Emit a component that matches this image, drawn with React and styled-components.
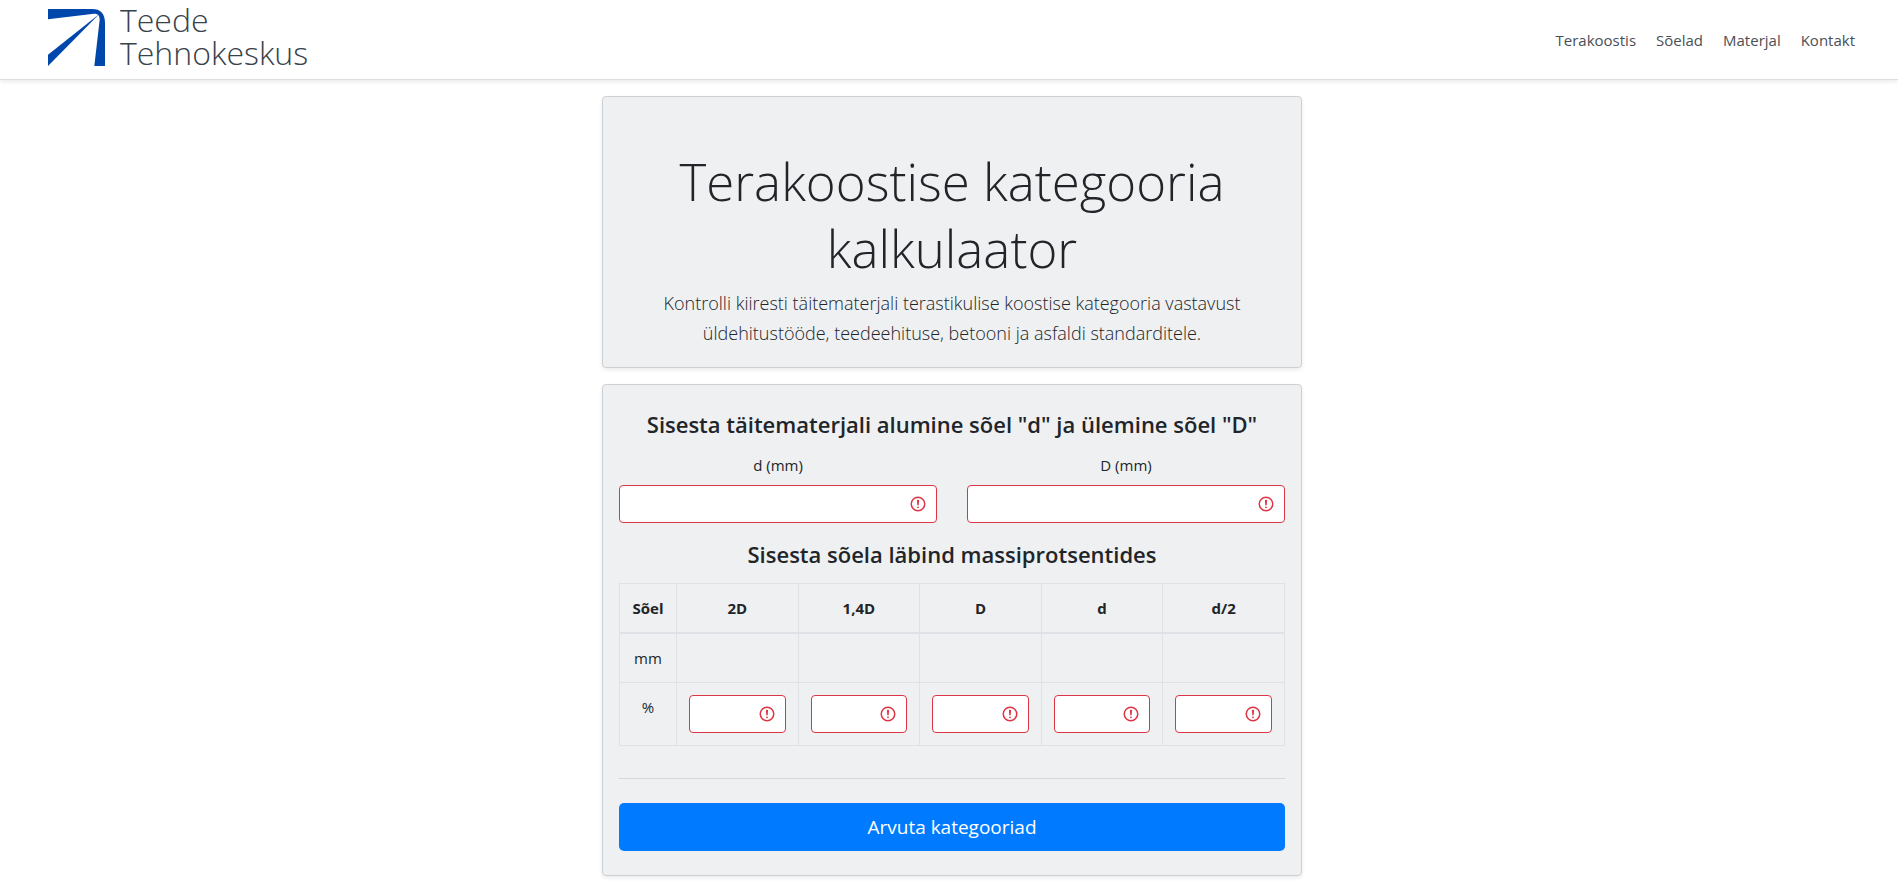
import { useState } from "react"
import styled, { createGlobalStyle } from "styled-components"

const links = ["Terakoostis", "Sõelad", "Materjal", "Kontakt"]
const sieves = ["2D", "1,4D", "D", "d", "d/2"]

function Logo() {
    return (
        <LogoMark viewBox="0 0 171 171" aria-hidden="true">
            <path d="M0 0H132C158 0 171 14 171 42V171H139L155 32C155 20 151 14 138 14L0 31Z" />
            <path d="M154 15L0 137V171Z" />
        </LogoMark>
    )
}

function InvalidInput({ id, label, value, onChange }) {
    return (
        <InputWrap>
            <Input id={id} type="text" aria-label={label} value={value} onChange={onChange} aria-invalid="true" required />
            <InvalidIcon viewBox="0 0 12 12" aria-hidden="true">
                <circle cx="6" cy="6" r="4.5" />
                <path strokeLinejoin="round" d="M5.8 3.6h.4L6 6.5z" />
                <circle cx="6" cy="8.2" r=".6" fill="#dc3545" stroke="none" />
            </InvalidIcon>
        </InputWrap>
    )
}

export default function App() {

    const [lower, setLower] = useState('')
    const [upper, setUpper] = useState('')
    const [percents, setPercents] = useState(sieves.map(() => ''))

    function changePercent(index, value) {
        setPercents(percents.map((p, i) => (i === index ? value : p)))
    }

    function calculate(event) {
        event.preventDefault()
    }

    return (
        <>
            <GlobalStyle />
            <Header>
                <Brand href="#">
                    <Logo />
                    <BrandName>
                        <span>Teede</span>
                        <span>Tehnokeskus</span>
                    </BrandName>
                </Brand>
                <Nav>
                    {links.map(link => (<NavLink key={link} href="#">{link}</NavLink>))}
                </Nav>
            </Header>

            <Main>
                <IntroCard>
                    <Title>Terakoostise kategooria kalkulaator</Title>
                    <Lead>Kontrolli kiiresti täitematerjali terastikulise koostise kategooria vastavust üldehitustööde, teedeehituse, betooni ja asfaldi standarditele.</Lead>
                </IntroCard>

                <FormCard onSubmit={calculate} noValidate>
                    <SubTitle>Sisesta täitematerjali alumine sõel "d" ja ülemine sõel "D"</SubTitle>
                    <Fields>
                        <Field>
                            <Label htmlFor="lower">d (mm)</Label>
                            <InvalidInput id="lower" value={lower} onChange={e => setLower(e.target.value)} />
                        </Field>
                        <Field>
                            <Label htmlFor="upper">D (mm)</Label>
                            <InvalidInput id="upper" value={upper} onChange={e => setUpper(e.target.value)} />
                        </Field>
                    </Fields>

                    <SubTitle>Sisesta sõela läbind massiprotsentides</SubTitle>
                    <Table>
                        <thead>
                            <tr>
                                <HeadCell $narrow>Sõel</HeadCell>
                                {sieves.map(sieve => (<HeadCell key={sieve}>{sieve}</HeadCell>))}
                            </tr>
                        </thead>
                        <tbody>
                            <tr>
                                <Cell>mm</Cell>
                                {sieves.map(sieve => (<Cell key={sieve} />))}
                            </tr>
                            <tr>
                                <Cell>%</Cell>
                                {sieves.map((sieve, index) => (
                                    <Cell key={sieve}>
                                        <InvalidInput label={sieve} value={percents[index]} onChange={e => changePercent(index, e.target.value)} />
                                    </Cell>
                                ))}
                            </tr>
                        </tbody>
                    </Table>

                    <Divider />
                    <Button type="submit">Arvuta kategooriad</Button>
                </FormCard>
            </Main>
        </>
    )
}


const GlobalStyle = createGlobalStyle`
    * {
        box-sizing: border-box;
    }
    body {
        margin: 0;
        background-color: #ffffff;
        color: #212529;
        font-family: "Segoe UI", "Open Sans", "Noto Sans", sans-serif;
        font-size: 15px;
        line-height: 24px;
    }
`

const Header = styled.header`
    display: flex;
    justify-content: space-between;
    align-items: center;
    height: 80px;
    padding: 0 43px 0 48px;
    border-bottom: 1px solid #dcdee0;
    box-shadow: 0 2px 4px rgba(0, 0, 0, 0.08);
`

const Brand = styled.a`
    display: flex;
    align-items: center;
    gap: 15px;
    padding-bottom: 4px;
    color: #37424b;
    text-decoration: none;
`

const LogoMark = styled.svg`
    width: 57px;
    height: 57px;
    fill: #0047ab;
`

const BrandName = styled.span`
    display: flex;
    flex-direction: column;
    padding-bottom: 4px;
    font-size: 32px;
    font-weight: 300;
    line-height: 33px;
`

const Nav = styled.nav`
    display: flex;
    gap: 20px;
`

const NavLink = styled.a`
    color: #4a4f55;
    text-decoration: none;
`

const Main = styled.main`
    max-width: 706px;
    margin: 16px auto;
    padding-left: 6px;
    text-align: center;
`

const IntroCard = styled.section`
    padding: 51px 16px 19px;
    background-color: #eff0f2;
    border: 1px solid #cdd0d3;
    border-radius: 4px;
    box-shadow: 0 2px 4px rgba(0, 0, 0, 0.08);
`

const FormCard = styled(IntroCard).attrs({ as: "form" })`
    margin-top: 16px;
    padding: 24px 16px;
`

const Title = styled.h1`
    margin: 0 0 6px;
    font-size: 51px;
    font-weight: 300;
    line-height: 67px;
`

const Lead = styled.p`
    margin: 0;
    padding: 0 32px;
    font-size: 18px;
    font-weight: 300;
    line-height: 30px;
`

const SubTitle = styled.h2`
    margin: 0 0 14px;
    font-size: 22px;
    font-weight: 600;
    line-height: 30px;
`

const Fields = styled.div`
    display: grid;
    grid-template-columns: 1fr 1fr;
    gap: 30px;
    margin-bottom: 16px;
`

const Field = styled.div`
    display: flex;
    flex-direction: column;
    gap: 8px;
`

const Label = styled.label`
    font-weight: 400;
`

const InputWrap = styled.div`
    position: relative;
`

const Input = styled.input`
    display: block;
    width: 100%;
    height: 38px;
    padding: 6px 36px 6px 12px;
    background-color: #ffffff;
    border: 1px solid #dc3545;
    border-radius: 4px;
    color: #495057;
    font: inherit;
`

const InvalidIcon = styled.svg`
    position: absolute;
    top: 10px;
    right: 10px;
    width: 18px;
    height: 18px;
    fill: none;
    stroke: #dc3545;
    pointer-events: none;
`

const Table = styled.table`
    width: 100%;
    table-layout: fixed;
    border-collapse: collapse;
    border: 1px solid #dee2e6;
`

const HeadCell = styled.th`
    width: ${props => (props.$narrow ? "57px" : "auto")};
    padding: 12px 0;
    border: 1px solid #dee2e6;
    border-bottom-width: 2px;
    font-weight: 700;
`

const Cell = styled.td`
    padding: 12px;
    border: 1px solid #dee2e6;
    vertical-align: top;
`

const Divider = styled.hr`
    margin: 32px 0 24px;
    border: 0;
    border-top: 1px solid rgba(0, 0, 0, 0.1);
`

const Button = styled.button`
    width: 100%;
    height: 48px;
    background-color: #007bff;
    border: 0;
    border-radius: 5px;
    color: #ffffff;
    font-family: inherit;
    font-size: 19px;
    cursor: pointer;
`
